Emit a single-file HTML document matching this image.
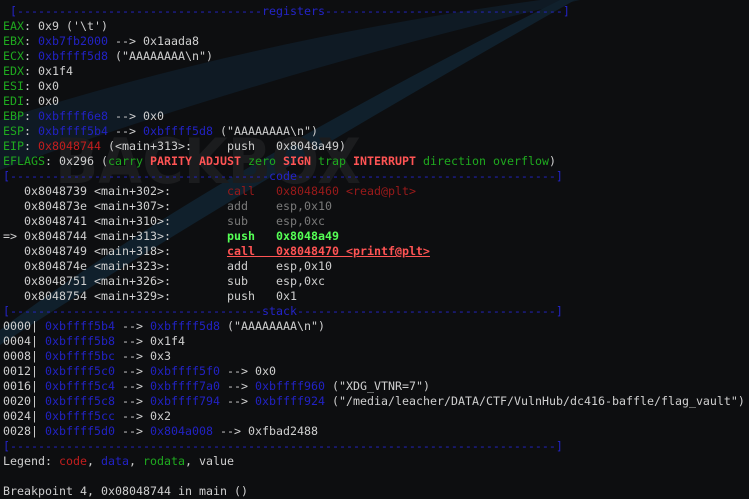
<!DOCTYPE html>
<html><head><meta charset="utf-8"><style>
html,body{margin:0;padding:0;width:749px;height:499px;overflow:hidden;background:#0d0e10;}
#bg{position:absolute;left:0;top:0;}
pre{position:absolute;left:3px;top:4px;margin:0;font-family:"DejaVu Sans Mono","Liberation Mono",monospace;font-size:11.63px;line-height:15px;color:#cfcfcf;white-space:pre;}
.g{color:#1faa1f}.b{color:#2222c4}.r{color:#c31e1e}.dr{color:#9a1a1a}.R{color:#ff5454;font-weight:bold}
.G{color:#55ff55;font-weight:bold}.gr{color:#7a7a7a}.h{color:#2424c8}
.u{text-decoration:underline}
</style></head><body>
<svg id="bg" width="749" height="499">
<path d="M0 120 Q250 40 540 0 L580 0 Q280 70 0 170 Z" fill="#0f1a24"/>
<path d="M0 330 Q200 180 560 0 L575 0 Q240 190 0 345 Z" fill="#10202c"/>
<text x="55" y="183" font-family="DejaVu Sans" font-weight="bold" font-size="62" fill="#1b1c1e" textLength="306" lengthAdjust="spacingAndGlyphs">BACKBOX</text>
</svg>
<pre> <span class="h">[-----------------------------------registers----------------------------------]</span>
<span class="g">EAX</span>: 0x9 ('\t')
<span class="g">EBX</span>: <span class="b">0xb7fb2000</span> --&gt; 0x1aada8
<span class="g">ECX</span>: <span class="b">0xbffff5d8</span> ("AAAAAAAA\n")
<span class="g">EDX</span>: 0x1f4
<span class="g">ESI</span>: 0x0
<span class="g">EDI</span>: 0x0
<span class="g">EBP</span>: <span class="b">0xbffff6e8</span> --&gt; 0x0
<span class="g">ESP</span>: <span class="b">0xbffff5b4</span> --&gt; <span class="b">0xbffff5d8</span> ("AAAAAAAA\n")
<span class="g">EIP</span>: <span class="r">0x8048744</span> (&lt;main+313&gt;:	push   0x8048a49)
<span class="g">EFLAGS</span>: 0x296 (<span class="g">carry</span> <span class="R">PARITY</span> <span class="R">ADJUST</span> <span class="g">zero</span> <span class="R">SIGN</span> <span class="g">trap</span> <span class="R">INTERRUPT</span> <span class="g">direction</span> <span class="g">overflow</span>)
<span class="h">[-------------------------------------code-------------------------------------]</span>
   0x8048739 &lt;main+302&gt;:	<span class="dr">call   0x8048460 &lt;read@plt&gt;</span>
   0x804873e &lt;main+307&gt;:	<span class="gr">add    esp,0x10</span>
   0x8048741 &lt;main+310&gt;:	<span class="gr">sub    esp,0xc</span>
=&gt; 0x8048744 &lt;main+313&gt;:	<span class="G">push   0x8048a49</span>
   0x8048749 &lt;main+318&gt;:	<span class="R u">call   0x8048470 &lt;printf@plt&gt;</span>
   0x804874e &lt;main+323&gt;:	add    esp,0x10
   0x8048751 &lt;main+326&gt;:	sub    esp,0xc
   0x8048754 &lt;main+329&gt;:	push   0x1
<span class="h">[------------------------------------stack-------------------------------------]</span>
0000| <span class="b">0xbffff5b4</span> --&gt; <span class="b">0xbffff5d8</span> ("AAAAAAAA\n")
0004| <span class="b">0xbffff5b8</span> --&gt; 0x1f4
0008| <span class="b">0xbffff5bc</span> --&gt; 0x3
0012| <span class="b">0xbffff5c0</span> --&gt; <span class="b">0xbffff5f0</span> --&gt; 0x0
0016| <span class="b">0xbffff5c4</span> --&gt; <span class="b">0xbffff7a0</span> --&gt; <span class="b">0xbffff960</span> ("XDG_VTNR=7")
0020| <span class="b">0xbffff5c8</span> --&gt; <span class="b">0xbffff794</span> --&gt; <span class="b">0xbffff924</span> ("/media/leacher/DATA/CTF/VulnHub/dc416-baffle/flag_vault")
0024| <span class="b">0xbffff5cc</span> --&gt; 0x2
0028| <span class="b">0xbffff5d0</span> --&gt; <span class="b">0x804a008</span> --&gt; 0xfbad2488
<span class="h">[------------------------------------------------------------------------------]</span>
Legend: <span class="r">code</span>, <span class="b">data</span>, <span class="g">rodata</span>, value

Breakpoint 4, 0x08048744 in main ()</pre>
</body></html>
